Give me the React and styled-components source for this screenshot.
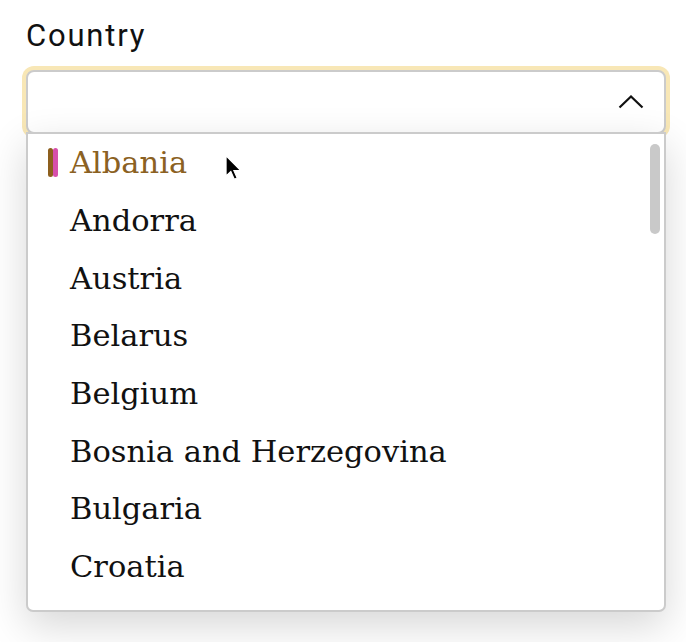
import React from "react";
import styled, { createGlobalStyle } from "styled-components";

const GlobalStyle = createGlobalStyle`
  html, body {
    margin: 0;
    padding: 0;
    background: #ffffff;
  }
  * {
    box-sizing: border-box;
  }
`;

const countries = [
  "Albania",
  "Andorra",
  "Austria",
  "Belarus",
  "Belgium",
  "Bosnia and Herzegovina",
  "Bulgaria",
  "Croatia",
  "Cyprus",
];

const Page = styled.div`
  width: 686px;
  height: 642px;
  padding: 16px 20px 0 26px;
  overflow: hidden;
`;

const Label = styled.div`
  font-family: Roboto, "Noto Sans", sans-serif;
  font-size: 31px;
  letter-spacing: 1.8px;
  line-height: 40px;
  color: #111;
  margin-bottom: 14px;
`;

const SelectBox = styled.div`
  position: relative;
  width: 640px;
`;

const Control = styled.div`
  height: 64px;
  display: flex;
  align-items: center;
  justify-content: flex-end;
  padding-right: 20px;
  border: 2px solid #cbcbcb;
  border-radius: 8px;
  background: #fff;
  box-shadow: 0 0 0 4px #f8e7b6;
`;

const Menu = styled.div`
  position: absolute;
  top: 62px;
  left: 0;
  right: 0;
  height: 480px;
  background: #fff;
  border: 2px solid #cbcbcb;
  border-radius: 0 0 7px 7px;
  box-shadow: 0 14px 40px rgba(0, 0, 0, 0.16);
  overflow: hidden;
  z-index: 2;
`;

const List = styled.ul`
  list-style: none;
  margin: 0;
  padding: 0;
`;

const Option = styled.li`
  height: 57.7px;
  display: flex;
  align-items: center;
  padding-left: 20px;
  font-family: "DejaVu Serif", "Liberation Serif", serif;
  font-size: 30.5px;
  color: ${(p) => (p.$active ? "#8b6122" : "#111")};
`;

const Marker = styled.span`
  width: 22px;
  flex-shrink: 0;
  display: flex;
  align-self: center;
  span {
    width: 5px;
    height: 29px;
    border-radius: 3px;
  }
  span:first-child {
    background: #8d5f1e;
  }
  span:last-child {
    background: #d64fab;
  }
`;

const Scrollbar = styled.div`
  position: absolute;
  top: 10px;
  right: 4px;
  width: 10px;
  height: 90px;
  border-radius: 5px;
  background: #c9c9c9;
`;

const Cursor = styled.svg`
  position: absolute;
  left: 197px;
  top: 21px;
  z-index: 3;
`;

const Chevron = () => (
  <svg width="26" height="14" viewBox="0 0 26 14">
    <path
      d="M1.5 12.5 L13 1.5 L24.5 12.5"
      fill="none"
      stroke="#111"
      strokeWidth="2.2"
    />
  </svg>
);

export default function App() {
  return (
    <Page>
      <GlobalStyle />
      <Label>Country</Label>
      <SelectBox>
        <Control>
          <Chevron />
        </Control>
        <Menu>
          <List>
            {countries.map((name, i) => (
              <Option key={name} $active={i === 0}>
                <Marker>
                  {i === 0 && (
                    <>
                      <span />
                      <span />
                    </>
                  )}
                </Marker>
                {name}
              </Option>
            ))}
          </List>
          <Scrollbar />
          <Cursor width="18" height="26" viewBox="0 0 12 18">
            <path
              d="M0.5 0.5 L0.5 14.5 L3.8 11.4 L6.2 16.8 L8.2 15.9 L5.9 10.7 L10.5 10.7 Z"
              fill="#000"
              stroke="#fff"
              strokeWidth="0.8"
            />
          </Cursor>
        </Menu>
      </SelectBox>
    </Page>
  );
}
